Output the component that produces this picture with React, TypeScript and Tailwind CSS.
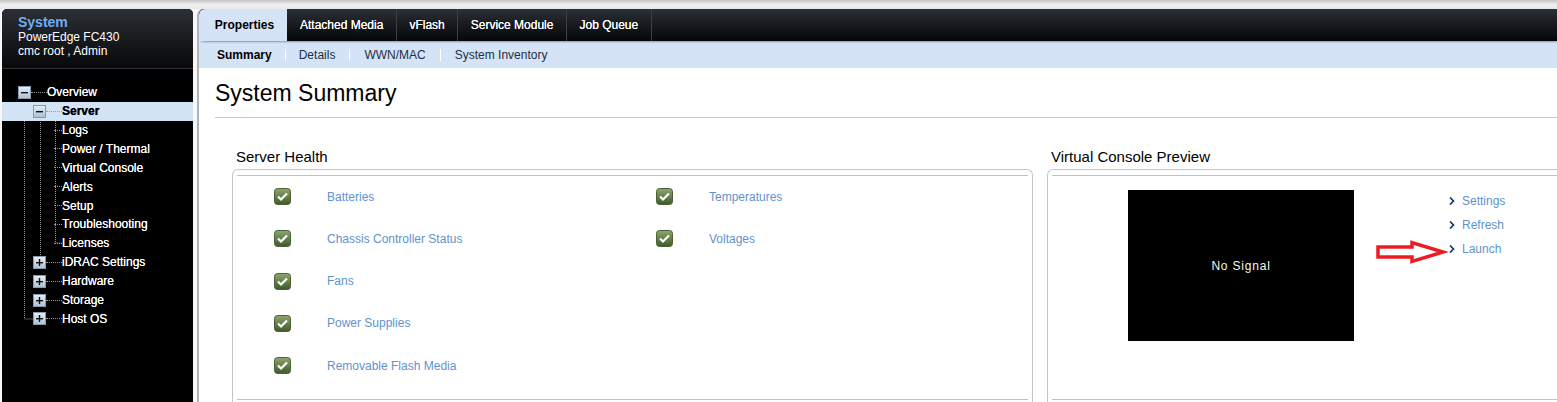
import React from "react";

const font = { fontFamily: '"Liberation Sans", Arial, sans-serif' };

function Toggle({ open }: { open: boolean }) {
  return (
    <span className="flex h-[13px] w-[13px] shrink-0 items-center justify-center border border-[#8a9bb0] bg-gradient-to-b from-[#e4edf5] to-[#aec2d6]">
      <svg width="9" height="9" viewBox="0 0 9 9">
        <rect x="1" y="4" width="7" height="1.4" fill="#111" />
        {!open && <rect x="3.8" y="1" width="1.4" height="7" fill="#111" />}
      </svg>
    </span>
  );
}

function Dots({ w }: { w: number }) {
  return <span className="shrink-0 border-t border-dotted border-[#9a9a9a]" style={{ width: w }} />;
}

function Row({ label, level, toggle, active }: { label: string; level: 0 | 1 | 2; toggle?: "open" | "closed"; active?: boolean }) {
  const pad = level === 0 ? "pl-[16px]" : toggle ? "pl-[31px]" : "pl-[52px]";
  return (
    <div className={`flex h-[18.9px] items-center ${pad} ${active ? "bg-[#d2e3f6] font-bold text-black" : "text-white"}`}>
      {toggle && <Toggle open={toggle === "open"} />}
      <Dots w={toggle ? 16 : 8} />
      <span className="whitespace-nowrap [text-shadow:0_0_0.4px_currentColor]">{label}</span>
    </div>
  );
}

function Check() {
  return (
    <svg width="17" height="17" viewBox="0 0 17 17" className="shrink-0">
      <defs>
        <linearGradient id="chk" x1="0" y1="0" x2="0" y2="1">
          <stop offset="0" stopColor="#8fa76f" />
          <stop offset="1" stopColor="#3d5a2a" />
        </linearGradient>
      </defs>
      <rect x="0.5" y="0.5" width="16" height="16" rx="3" fill="url(#chk)" stroke="#4a6136" />
      <path d="M4 8.5 L7 11.5 L13 5.5" fill="none" stroke="#fff" strokeWidth="2.2" />
    </svg>
  );
}

function Health({ label }: { label: string }) {
  return (
    <div className="flex h-[42.25px] items-center">
      <Check />
      <span className="ml-[36px] whitespace-nowrap text-[12px] text-[#5f93cc]">{label}</span>
    </div>
  );
}

function Panel({ title, className, children }: { title: string; className: string; children: React.ReactNode }) {
  return (
    <section className={`flex flex-col ${className}`}>
      <h2 className="mb-[2px] h-[20px] pl-[4px] text-[15px] leading-[20px] text-black">{title}</h2>
      <div className="flex h-[300px] flex-col rounded-t-[6px] border border-b-0 border-[#c4c4cc] px-[4px] pt-[5px]">
        <div className="h-px bg-[#c0c0c6]" />
        <div className="h-[223px]">{children}</div>
        <div className="h-px bg-[#c0c0c6]" />
      </div>
    </section>
  );
}

function SideLink({ label }: { label: string }) {
  return (
    <div className="flex h-[24px] items-center">
      <svg width="6" height="8" viewBox="0 0 6 8" className="shrink-0">
        <path d="M1 0.5 L4.5 4 L1 7.5" fill="none" stroke="#0b2f66" strokeWidth="1.6" />
      </svg>
      <span className="ml-[7px] text-[12px] text-[#5f93cc]">{label}</span>
    </div>
  );
}

export default function App() {
  const tabs = ["Attached Media", "vFlash", "Service Module", "Job Queue"];
  const subs = ["Details", "WWN/MAC", "System Inventory"];
  return (
    <div className="flex h-[402px] w-[1557px] flex-col overflow-hidden bg-white text-[12px]" style={font}>
      <div className="h-[9px] shrink-0 bg-gradient-to-b from-[#c4c4c4] via-[#f0f0f0] to-[#e8e8e8]" />
      <div className="flex min-h-0 flex-1 bg-[#f7f7f7] pl-[2px]">
        <aside className="flex w-[191px] shrink-0 flex-col overflow-hidden rounded-t-[5px] bg-black">
          <div className="h-[60px] shrink-0 border-b border-[#2e3138] bg-gradient-to-b from-[#2c2f36] to-[#08090a] pl-[16px] pt-[5px] leading-[14px] text-white">
            <div className="text-[14px] font-bold leading-[16px] text-[#70aef0]">System</div>
            <div>PowerEdge FC430</div>
            <div>cmc root , Admin</div>
          </div>
          <div className="relative pt-[13.8px]">
            <svg className="pointer-events-none absolute left-0 top-0" width="60" height="260" fill="none" stroke="#9a9a9a" strokeDasharray="1 1">
              <path d="M22.5 36 V250 H31" />
              <path d="M38.5 49 V194" />
              <path d="M53.5 48 V174 H60" />
            </svg>
            <div className="relative">
              <Row label="Overview" level={0} toggle="open" />
              <Row label="Server" level={1} toggle="open" active />
              {["Logs", "Power / Thermal", "Virtual Console", "Alerts", "Setup", "Troubleshooting", "Licenses"].map((l) => (
                <Row key={l} label={l} level={2} />
              ))}
              {["iDRAC Settings", "Hardware", "Storage", "Host OS"].map((l) => (
                <Row key={l} label={l} level={1} toggle="closed" />
              ))}
            </div>
          </div>
        </aside>
        <main className="ml-[4px] flex min-w-0 flex-1 flex-col overflow-hidden rounded-tl-[6px] border-l-[2px] border-[#aeb4ba] bg-white">
          <div className="h-[59px] shrink-0 bg-[#d4e4f6]">
            <div className="flex h-[32px] rounded-bl-[5px] bg-gradient-to-b from-[#2c2f36] to-[#060708] shadow-[0_1px_2px_#7f97b3]">
              <div className="mr-[0.5px] flex h-[32px] w-[88px] items-center justify-center rounded-tl-[6px] bg-[#d4e4f6] pl-[3px] font-bold text-black">Properties</div>
              {tabs.map((t) => (
                <div key={t} className="flex items-center whitespace-nowrap border-r border-[#3c3f46] px-[12.5px] text-white [text-shadow:0_0_0.4px_currentColor]">{t}</div>
              ))}
            </div>
            <div className="flex h-[27px] items-center pl-[18px] text-[#1f2f44]">
              <span className="font-bold text-black">Summary</span>
              <span className="ml-[13px] h-[12px] w-px bg-white" />
              <span className="w-[13px]" />
              {subs.map((s, i) => (
                <React.Fragment key={s}>
                  <span className={i === 0 ? "" : "ml-[14px]"}>{s}</span>
                  {i < subs.length - 1 && <span className="ml-[14px] h-[12px] w-px bg-white" />}
                </React.Fragment>
              ))}
            </div>
          </div>
          <div className="h-[49px] shrink-0 pl-[16px] pt-[10px] text-[23px] leading-[30px] text-black">System Summary</div>
          <div className="ml-[16px] h-px shrink-0 bg-[#c8c8c8]" />
          <div className="flex gap-[14px] pl-[33px] pt-[29px]">
            <Panel title="Server Health" className="w-[801px] shrink-0">
              <div className="-mt-[0.4px] flex">
                <div className="w-[419px] pl-[37px]">
                  {["Batteries", "Chassis Controller Status", "Fans", "Power Supplies", "Removable Flash Media"].map((l) => (
                    <Health key={l} label={l} />
                  ))}
                </div>
                <div>
                  {["Temperatures", "Voltages"].map((l) => (
                    <Health key={l} label={l} />
                  ))}
                </div>
              </div>
            </Panel>
            <Panel title="Virtual Console Preview" className="w-[520px] shrink-0">
              <div className="flex pl-[76px] pt-[14px]">
                <div className="flex h-[151px] w-[226px] shrink-0 items-center justify-center bg-black pt-px text-[12px] font-normal tracking-[0.8px] text-[#f6f6ea]">No Signal</div>
                <div className="relative -mt-px ml-[95px]">
                  <SideLink label="Settings" />
                  <SideLink label="Refresh" />
                  <SideLink label="Launch" />
                  <svg className="absolute left-[-73px] top-[49px]" width="74" height="28" viewBox="0 0 74 28" fill="#fff" stroke="#ed1c24" strokeWidth="3.5">
                    <path d="M2 9 H36 V4.5 L67 14 L36 23.5 V19 H2 Z" />
                  </svg>
                </div>
              </div>
            </Panel>
          </div>
        </main>
      </div>
    </div>
  );
}
